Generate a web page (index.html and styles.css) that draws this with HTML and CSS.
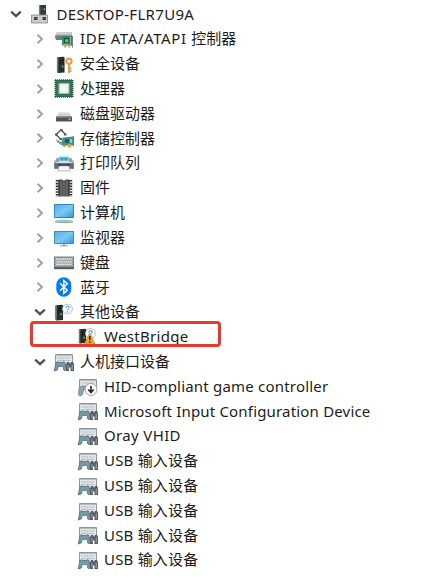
FILE: index.html
```html
<!DOCTYPE html>
<html lang="zh-CN">
<head>
<meta charset="utf-8">
<title>设备管理器</title>
<link rel="stylesheet" href="styles.css">
</head>
<body>
<svg class="defs" width="0" height="0">
  <defs>
    <linearGradient id="screen" x1="0" y1="0" x2="1" y2="1"><stop offset="0" stop-color="#4bb0e8"/><stop offset=".5" stop-color="#7bcbf3"/><stop offset="1" stop-color="#3199df"/></linearGradient>
    <symbol id="closed" viewBox="0 0 12 12"><path d="M3.500 1.700 8 6 3.500 10.300" fill="none" stroke="#a2a2a2" stroke-width="2"/></symbol>
    <symbol id="open" viewBox="0 0 12 12"><path d="M1.200 3.600 6 8.200l4.800-4.600" fill="none" stroke="#505050" stroke-width="2.300"/></symbol>
    <symbol id="host" viewBox="0 0 22 22"><path d="M10 2h7v10h-7z" fill="#343b3d"/><path d="M10 2h1.300v10H10z" fill="#747b7c"/><path d="M14.500 5.500H16V7h-1.500z" fill="#79c894"/><path d="M2.500 12h16v8h-16z" fill="#c9cccd" stroke="#85898b" stroke-width=".8"/><path d="M5 14h3.500v3H5zm8.500 0H17v3h-3.500z" fill="#45484a"/></symbol>
    <symbol id="board" viewBox="0 0 12 12"><path d="M1 0h10v9H1z" fill="#31895a"/><path d="M3 2h5v5H3z" fill="#184c38"/><path d="M4 3h3v3H4z" fill="#82ba8e"/><path d="M9 1v7M2 8h6" stroke="#82c5a5"/><path d="M3 9h2v2H3zm4 0h2v2H7z" fill="#d6a83d"/><path d="M11 0v11" stroke="#777f83"/></symbol>
    <symbol id="ide" viewBox="0 0 22 22"><path d="M4 4h15v7H2V8z" fill="#b9bec0"/><path d="M2 7.500h17V12H3z" fill="#757b7d"/><path d="M4 5h14" stroke="#e2e4e4"/><use href="#board" x="8" y="8" width="12.500" height="12.500"/></symbol>
    <symbol id="tower" viewBox="0 0 10 17" preserveAspectRatio="none"><path d="m1 1 7-1 1 1v15l-7 .5-1-1z" fill="#262d2b"/><path d="M1 1v14l1.500 1V1z" fill="#767b78"/><path d="M4 4h4M4 6.500h4" stroke="#111a18"/><path d="M6 9h1.700v2H6z" fill="#51c57b"/></symbol>
    <symbol id="security" viewBox="0 0 22 22"><use href="#tower" x="3" y="3.500" width="9.500" height="17"/><circle cx="16" cy="8.200" r="2.600" fill="#fff" stroke="#dba451" stroke-width="2.200"/><path d="M16 11.500v8.500M16.500 15.500h2m-2 2.500h2" fill="none" stroke="#dba451" stroke-width="2"/></symbol>
    <symbol id="cpu" viewBox="0 0 22 22"><path d="M2.500 2h17v17h-17z" fill="#377357"/><path d="M2 2h18M2 19h18M2.300 2v17M19.700 2v17" stroke="#245641" stroke-width="1.600" stroke-dasharray="1.200 .8"/><path d="M6 5.500h10v10H6z" fill="#e9edea" stroke="#a9b9ae"/><path d="M8 7.500h6v6H8z" fill="#f8faf9"/></symbol>
    <symbol id="disk" viewBox="0 0 22 22"><path d="M6 9.500h10l3 4.500H3z" fill="#d0d3d4"/><path d="M3 13.500h16v5H3z" fill="#4e5456"/><path d="M3 14h16" stroke="#8d9294"/><path d="M15.500 15.500h2V17h-2z" fill="#63dc80"/></symbol>
    <symbol id="storage" viewBox="0 0 22 22"><path d="m8 3 4.500 4.500M3 7.500 8 3M3 7.500 7.500 12" fill="none" stroke="#484d4c" stroke-width="1.300"/><path d="M7 2h2.500v2H7zM2 6.500h2.500v2H2zm9 0h2.500v2H11zM6.500 11H9v2H6.500z" fill="#555b59"/><path d="m3 12 5 3 3-4v7H8l-4-3z" fill="#8c9799"/><path d="m9.500 10.500 10.500-1v9H9z" fill="#3d928c"/><path d="M12 12h4v4h-4z" fill="#235963"/><path d="M17 12h2v4h-2z" fill="#8bced1"/><path d="M10 18h3v2h-3zm5-1h3v3.500h-3z" fill="#dda92c"/><path d="M20.500 9v10" stroke="#6c7779"/></symbol>
    <symbol id="printer" viewBox="0 0 22 22"><path d="M6 4.500h10l2 5H4z" fill="#8fd3ee"/><path d="M7 5.500h8v3H7z" fill="#3aa8c7"/><path d="M4 6h2v4h10V6h2l3 4v7H1v-7z" fill="#969da0"/><path d="M1.500 11h19v5.500h-19z" fill="#676e72"/><path d="M2 10.500h18" stroke="#ddd"/><path d="M5 12.300h12v2H5z" fill="#303437"/><path d="M6 14h10l1 5H5z" fill="#f5f6f6" stroke="#a6acae" stroke-width=".7"/></symbol>
    <symbol id="firmware" viewBox="0 0 22 22"><path d="M5.500 2.500h4q1.500 2 3 0h4v17h-11z" fill="#555859"/><path d="M8 5v14m6-14v14M11 6v13" stroke="#676b6c" stroke-width="1.500"/><path d="M4 3v17M18 3v17" stroke="#303334" stroke-width="2.500" stroke-dasharray="1.600 1.200"/><path d="M6 3v16M16 3v16" stroke="#202324"/></symbol>
    <symbol id="computer" viewBox="0 0 22 22"><path d="M1.500 2.500h19v13h-19z" fill="url(#screen)" stroke="#3984b1"/><path d="M2 15.500h18" stroke="#347ba2"/><path d="M3 18.500q8-2 16 0l1.500 1.500q-9.500 2-19 0z" fill="#a7c5d0"/><path d="M2 20q9 1.600 18 0" fill="none" stroke="#6e99aa" stroke-width=".7"/></symbol>
    <symbol id="monitor" viewBox="0 0 22 22"><path d="M1.500 4.500h19v12h-19z" fill="url(#screen)" stroke="#51859f"/><path d="M10 17h2v2h-2z" fill="#91a9b2"/><path d="M7 18.800h8" stroke="#829ba7"/></symbol>
    <symbol id="keyboard" viewBox="0 0 22 22"><path d="M1 4.500h20v12.500H1z" fill="#777d81"/><path d="M2 5.500h18v9H2z" fill="#a4a9ac"/><path d="M3 7.200h16M4 9.800h15M3 12.400h16" stroke="#eceeee" stroke-width="1.300" stroke-dasharray="1.500 .7"/><path d="M1 16.300h20" stroke="#51575b" stroke-width="1.800"/></symbol>
    <symbol id="bluetooth" viewBox="0 0 22 22"><rect x="3.300" y="1.200" width="15" height="19.600" rx="7.500" fill="#087be8"/><path d="m7 7.200 7.300 7-3.500 3.300v-13l3.500 3.200L7 14.700" fill="none" stroke="#fff" stroke-width="1.400"/></symbol>
    <symbol id="question" viewBox="0 0 10 10"><circle cx="5" cy="5" r="4.500" fill="#f5fafc" stroke="#a6bdca" stroke-width=".8"/><path d="M3.500 4q0-1.700 1.600-1.700T6.600 3.800C6.600 4.900 5 4.800 5 6.200M5 7.200v1" fill="none" stroke="#4c8fb0" stroke-width=".9"/></symbol>
    <symbol id="other" viewBox="0 0 22 22"><use href="#tower" x="1.500" y="3.500" width="9.500" height="16.500"/><use href="#question" x="9" y="2.500" width="11" height="11"/></symbol>
    <symbol id="warning" viewBox="0 0 22 22"><use href="#tower" x="1" y="2.500" width="9" height="15.500"/><use href="#question" x="8" y="2" width="11" height="11"/><path d="m12.800 6.500 5.500 11.700h-11z" fill="#f4a527" stroke="#d98a22" stroke-width=".6"/><path d="M12.800 10v4m0 1.300v1.500" stroke="#332414" stroke-width="1.600"/></symbol>
    <symbol id="keys" viewBox="0 0 22 22"><path d="M2.500 3.500h17v10h-17z" fill="#e1e5e7" stroke="#8e999f"/><path d="M3 4h16" stroke="#899397"/><path d="M4.500 7h13M5 9.500h12" stroke="#aab1b5" stroke-width="1.200" stroke-dasharray="1.700 .8"/></symbol>
    <symbol id="hid" viewBox="0 0 22 22"><use href="#keys"/><path d="M3 11.500q1.500-1.500 3 0h3q2-1.500 3 0l1 7.500q-2.500 2-3.300-3H5.500q-.5 4-4.300 4z" fill="#7499a8" stroke="#566b75" stroke-width=".8"/><path d="M5.500 16h4.300v4H5.500z" fill="#fff"/><path d="M14 11h2l1 2 1-2h2l1 2v7h-3.500v-3.500h-1.500V20h-3v-6z" fill="#555d63"/><path d="M15 14v4.500m4.200-5v5.500" stroke="#a4adb1"/></symbol>
    <symbol id="game" viewBox="0 0 22 22"><use href="#keys"/><path d="M2.500 10.500h6v3H6.500q0 6-3.500 6.500-3 0-.5-9.500" fill="#8ba4af" stroke="#6f838d" stroke-width=".7"/><circle cx="14" cy="13.500" r="6" fill="#fbfbfb" stroke="#899196" stroke-width=".8"/><path d="M14 10v6m-2.700-2.500 2.700 3 2.700-3" fill="none" stroke="#222" stroke-width="1.600"/></symbol>
  </defs>
</svg>
<main class="tree">
  <div class="row root"><svg class="arrow"><use href="#open"/></svg><svg class="icon"><use href="#host"/></svg><span class="label name">DESKTOP-FLR7U9A</span></div>
  <div class="row"><svg class="arrow"><use href="#closed"/></svg><svg class="icon"><use href="#ide"/></svg><span class="label ata">IDE ATA/ATAPI <span class="cjk">控制器</span></span></div>
  <div class="row"><svg class="arrow"><use href="#closed"/></svg><svg class="icon"><use href="#security"/></svg><span class="label">安全设备</span></div>
  <div class="row"><svg class="arrow"><use href="#closed"/></svg><svg class="icon"><use href="#cpu"/></svg><span class="label">处理器</span></div>
  <div class="row"><svg class="arrow"><use href="#closed"/></svg><svg class="icon"><use href="#disk"/></svg><span class="label">磁盘驱动器</span></div>
  <div class="row"><svg class="arrow"><use href="#closed"/></svg><svg class="icon"><use href="#storage"/></svg><span class="label">存储控制器</span></div>
  <div class="row"><svg class="arrow"><use href="#closed"/></svg><svg class="icon"><use href="#printer"/></svg><span class="label">打印队列</span></div>
  <div class="row"><svg class="arrow"><use href="#closed"/></svg><svg class="icon"><use href="#firmware"/></svg><span class="label">固件</span></div>
  <div class="row"><svg class="arrow"><use href="#closed"/></svg><svg class="icon"><use href="#computer"/></svg><span class="label">计算机</span></div>
  <div class="row"><svg class="arrow"><use href="#closed"/></svg><svg class="icon"><use href="#monitor"/></svg><span class="label">监视器</span></div>
  <div class="row"><svg class="arrow"><use href="#closed"/></svg><svg class="icon"><use href="#keyboard"/></svg><span class="label">键盘</span></div>
  <div class="row"><svg class="arrow"><use href="#closed"/></svg><svg class="icon"><use href="#bluetooth"/></svg><span class="label">蓝牙</span></div>
  <div class="row"><svg class="arrow"><use href="#open"/></svg><svg class="icon"><use href="#other"/></svg><span class="label">其他设备</span></div>
  <div class="row leaf marked"><svg class="icon"><use href="#warning"/></svg><span class="label west">WestBridge</span></div>
  <div class="row"><svg class="arrow"><use href="#open"/></svg><svg class="icon"><use href="#hid"/></svg><span class="label">人机接口设备</span></div>
  <div class="row leaf"><svg class="icon"><use href="#game"/></svg><span class="label hidc">HID-compliant game controller</span></div>
  <div class="row leaf"><svg class="icon"><use href="#hid"/></svg><span class="label ms">Microsoft Input Configuration Device</span></div>
  <div class="row leaf"><svg class="icon"><use href="#hid"/></svg><span class="label oray">Oray VHID</span></div>
  <div class="row leaf"><svg class="icon"><use href="#hid"/></svg><span class="label usb">USB 输入设备</span></div>
  <div class="row leaf"><svg class="icon"><use href="#hid"/></svg><span class="label usb">USB 输入设备</span></div>
  <div class="row leaf"><svg class="icon"><use href="#hid"/></svg><span class="label usb">USB 输入设备</span></div>
  <div class="row leaf"><svg class="icon"><use href="#hid"/></svg><span class="label usb">USB 输入设备</span></div>
  <div class="row leaf"><svg class="icon"><use href="#hid"/></svg><span class="label usb">USB 输入设备</span></div>
</main>
</body>
</html>
```
FILE: styles.css
```css
body { margin: 0; background: #fff; color: #1c1c1c; font: 15px/24px "Noto Sans", "Noto Sans CJK SC", sans-serif; overflow: hidden; }
.defs { display: block; }
.tree { padding-top: 2px; }
.row { position: relative; display: flex; align-items: center; height: 24.82px; padding-left: 34px; white-space: nowrap; }
.root { padding-left: 10px; }
.leaf { padding-left: 77px; }
.arrow { flex: none; width: 12px; height: 12px; margin-right: 7px; }
.icon { flex: none; width: 22px; height: 22px; margin-right: 5px; }
.root .icon { margin-right: 5.500px; }
.label { height: 24px; margin-bottom: 1.600px; }
.name { letter-spacing: .3px; }
.ata { letter-spacing: .6px; }
.cjk { letter-spacing: .1px; }
.west { letter-spacing: .3px; }
.hidc { letter-spacing: .2px; }
.ms { letter-spacing: .18px; }
.oray { letter-spacing: .35px; }
.usb { letter-spacing: .2px; }
.marked::after { content: ""; position: absolute; left: 30px; top: -4px; width: 185px; height: 20px; border: 3px solid #e53a2e; border-radius: 4px; }
```
